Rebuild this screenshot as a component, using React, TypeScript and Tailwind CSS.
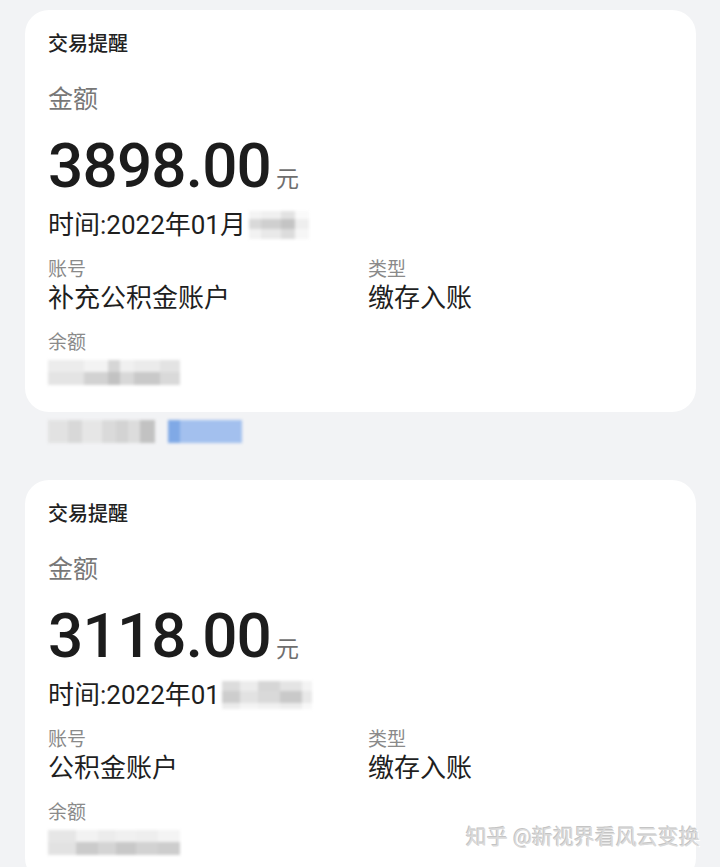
import React from "react";

const FONT = { fontFamily: 'Roboto, "Noto Sans CJK SC", sans-serif' };

function Cells({ cells, h }: { cells: [number, string][]; h: number }) {
  return (
    <div className="flex" style={{ height: h }}>
      {cells.map(([w, c], i) => (
        <div key={i} style={{ width: w, background: c }} />
      ))}
    </div>
  );
}

function Mosaic({ rows, className }: { rows: { h: number; cells: [number, string][] }[]; className?: string }) {
  return (
    <div className={"flex flex-col blur-[1.5px] " + (className || "")}>
      {rows.map((r, i) => (
        <Cells key={i} cells={r.cells} h={r.h} />
      ))}
    </div>
  );
}

function Card({
  amount,
  timeText,
  timeBlur,
  account,
  balanceBlur,
}: {
  amount: string;
  timeText: string;
  timeBlur: React.ReactNode;
  account: string;
  balanceBlur: React.ReactNode;
}) {
  return (
    <div className="ml-[25px] w-[671px] h-[402px] shrink-0 rounded-[24px] bg-white pl-[23px] pt-[22px]">
      <div className="h-[24px] text-[20px] leading-[24px] font-medium text-[#222222]">交易提醒</div>
      <div className="mt-[29px] h-[30px] text-[25px] leading-[30px] text-[#777777]">金额</div>
      <div className="mt-[20px] flex h-[62px] items-baseline">
        <span className="text-[62px] leading-[62px] font-medium text-[#1c1c1c] tracking-[-0.8px]">{amount}</span>
        <span className="ml-[5px] text-[23px] leading-[62px] text-[#6f6f6f]">元</span>
      </div>
      <div className="mt-[13px] flex h-[30px] items-center">
        <span className="text-[26px] leading-[30px] text-[#1f1f1f]">{timeText}</span>
        {timeBlur}
      </div>
      <div className="mt-[18px] grid grid-cols-[320px_1fr]">
        <div>
          <div className="h-[24px] text-[19px] leading-[24px] text-[#8a8a8a]">账号</div>
          <div className="mt-[1px] h-[30px] text-[26px] leading-[30px] text-[#1f1f1f]">{account}</div>
        </div>
        <div>
          <div className="h-[24px] text-[19px] leading-[24px] text-[#8a8a8a]">类型</div>
          <div className="mt-[1px] h-[30px] text-[26px] leading-[30px] text-[#1f1f1f]">缴存入账</div>
        </div>
      </div>
      <div className="mt-[18px] h-[24px] text-[19px] leading-[24px] text-[#8a8a8a]">余额</div>
      <div className="mt-[5px] h-[25px]">{balanceBlur}</div>
    </div>
  );
}

export default function App() {
  const time1Blur = (
    <Mosaic
      className="ml-[3px]"
      rows={[
        { h: 8, cells: [[12, "#f4f4f4"], [20, "#f0f0f0"], [14, "#e2e2e2"], [14, "#fafafa"]] },
        { h: 10, cells: [[12, "#d9d9d9"], [20, "#cfcfcf"], [14, "#c4c4c4"], [14, "#eeeeee"]] },
        { h: 10, cells: [[12, "#f2f2f2"], [20, "#e9e9e9"], [14, "#dcdcdc"], [14, "#f6f6f6"]] },
      ]}
    />
  );
  const time2Blur = (
    <Mosaic
      className="ml-[2px]"
      rows={[
        { h: 10, cells: [[18, "#dcdcdc"], [18, "#ececec"], [22, "#d6d6d6"], [22, "#e4e4e4"], [10, "#f3f3f3"]] },
        { h: 12, cells: [[18, "#cdcdcd"], [18, "#e2e2e2"], [22, "#d9d9d9"], [22, "#c9c9c9"], [10, "#e8e8e8"]] },
        { h: 6, cells: [[18, "#ececec"], [18, "#f4f4f4"], [22, "#f1f1f1"], [22, "#ececec"], [10, "#f8f8f8"]] },
      ]}
    />
  );
  const bal1 = (
    <Mosaic
      rows={[
        { h: 12, cells: [[36, "#ececec"], [24, "#f3f3f3"], [12, "#d6d6d6"], [14, "#f0f0f0"], [26, "#ebebeb"], [20, "#e3e3e3"]] },
        { h: 13, cells: [[36, "#e4e4e4"], [24, "#d2d2d2"], [12, "#c2c2c2"], [14, "#d8d8d8"], [26, "#c9c9c9"], [20, "#d9d9d9"]] },
      ]}
    />
  );
  const bal2 = (
    <Mosaic
      rows={[
        { h: 12, cells: [[28, "#e6e6e6"], [22, "#f2f2f2"], [18, "#ececec"], [20, "#f0f0f0"], [22, "#eeeeee"], [22, "#f4f4f4"]] },
        { h: 13, cells: [[28, "#e2e2e2"], [22, "#cbcbcb"], [18, "#d4d4d4"], [20, "#c8c8c8"], [22, "#d2d2d2"], [22, "#cdcdcd"]] },
      ]}
    />
  );

  return (
    <div className="relative h-[867px] w-[720px] overflow-hidden bg-[#f2f3f5] pt-[10px]" style={FONT}>
      <Card amount="3898.00" timeText="时间:2022年01月" timeBlur={time1Blur} account="补充公积金账户" balanceBlur={bal1} />
      <div className="ml-[48px] mt-[8px] flex h-[23px] items-stretch">
        <Mosaic
          rows={[
            {
              h: 23,
              cells: [
                [20, "#e2e2e2"],
                [14, "#d8d8d8"],
                [20, "#e6e6e6"],
                [14, "#dadada"],
                [12, "#d3d3d3"],
                [12, "#dcdcdc"],
                [15, "#c2c2c2"],
              ],
            },
          ]}
        />
        <div className="ml-[13px] flex blur-[1.5px]">
          <div className="w-[12px] bg-[#80a9e6]" />
          <div className="w-[62px] bg-[#a3c0ee]" />
        </div>
      </div>
      <div className="mt-[37px]">
        <Card amount="3118.00" timeText="时间:2022年01" timeBlur={time2Blur} account="公积金账户" balanceBlur={bal2} />
      </div>
      <div className="absolute right-[20px] top-[823px] text-[21px] leading-[28px] text-[#dadada] [text-shadow:-1px_-1px_0_#c4c4c4,1px_1px_0_#ffffff]">
        知乎 @新视界看风云变换
      </div>
    </div>
  );
}
